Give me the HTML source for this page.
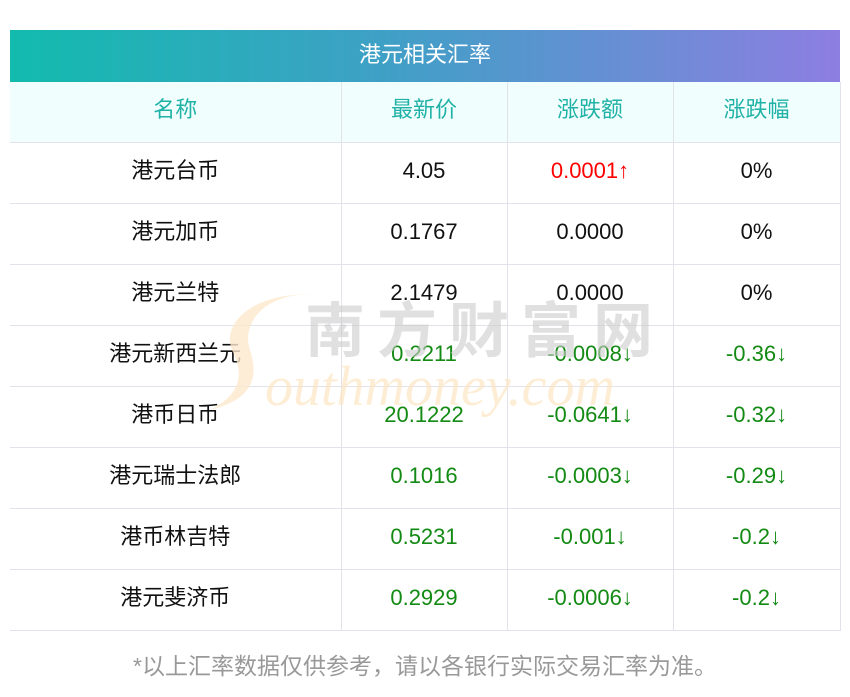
<!DOCTYPE html>
<html><head><meta charset="utf-8"><style>
body{margin:0;width:850px;height:697px;background:#fff;font-family:"Liberation Sans","Noto Sans CJK SC",sans-serif;position:relative;overflow:hidden}
.title{position:absolute;left:10px;top:30px;width:830px;height:52px;background:linear-gradient(90deg,#12bbae,#3fa0c6 45%,#8d7ee1);color:#fff;font-size:22px;line-height:50px;text-align:center}
table{position:absolute;left:10px;top:82px;width:830px;border-collapse:collapse;table-layout:fixed}
td{height:56px;border-bottom:1px solid #e2e2ea;border-left:1px solid #e2e2ea;text-align:center;font-size:22px;line-height:22px;color:#111;padding:0 0 4px 0;vertical-align:middle}
td:first-child{border-left:none}
td:last-child{border-right:1px solid #e2e2ea}
tr.h td{background:#f0fefe;color:#20b2a6}
.r{color:#f00}.g{color:#138a13}
.note{position:absolute;left:0;width:850px;top:647px;text-align:center;color:#999;font-size:23px}
.wm{position:absolute;left:0;top:0;pointer-events:none}
</style></head><body>
<div class="title">港元相关汇率</div>
<table>
<colgroup><col style="width:331px"><col style="width:166px"><col style="width:166px"><col style="width:167px"></colgroup>
<tr class="h"><td>名称</td><td>最新价</td><td>涨跌额</td><td>涨跌幅</td></tr>
<tr><td>港元台币</td><td>4.05</td><td class="r">0.0001↑</td><td>0%</td></tr>
<tr><td>港元加币</td><td>0.1767</td><td>0.0000</td><td>0%</td></tr>
<tr><td>港元兰特</td><td>2.1479</td><td>0.0000</td><td>0%</td></tr>
<tr><td>港元新西兰元</td><td class="g">0.2211</td><td class="g">-0.0008↓</td><td class="g">-0.36↓</td></tr>
<tr><td>港币日币</td><td class="g">20.1222</td><td class="g">-0.0641↓</td><td class="g">-0.32↓</td></tr>
<tr><td>港元瑞士法郎</td><td class="g">0.1016</td><td class="g">-0.0003↓</td><td class="g">-0.29↓</td></tr>
<tr><td>港币林吉特</td><td class="g">0.5231</td><td class="g">-0.001↓</td><td class="g">-0.2↓</td></tr>
<tr><td>港元斐济币</td><td class="g">0.2929</td><td class="g">-0.0006↓</td><td class="g">-0.2↓</td></tr>
</table>
<svg class="wm" width="850" height="697">
<path d="M318,295 C270,290 240,320 250,350 C260,380 250,400 210,410 C240,395 245,375 232,350 C220,320 260,290 318,295Z" fill="#fde9cc" opacity="0.8"/>
<text x="305" y="352" font-size="60" font-family="Noto Sans CJK SC,sans-serif" font-weight="bold" fill="#ccc" opacity="0.6" letter-spacing="12">南方财富网</text>
<text x="265" y="405" font-size="56" font-style="italic" font-family="Liberation Serif,serif" fill="#fde6c4" opacity="0.7">outhmoney.com</text>
</svg>
<div class="note">*以上汇率数据仅供参考，请以各银行实际交易汇率为准。</div>
</body></html>
